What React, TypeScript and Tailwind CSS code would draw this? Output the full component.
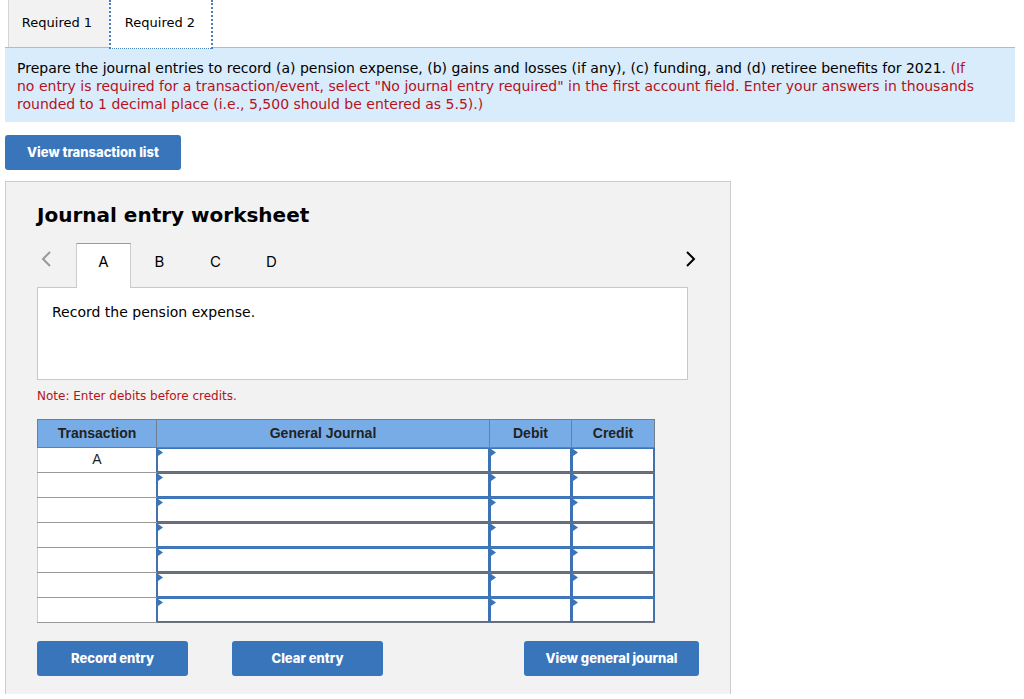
import React, { useState } from 'react';

interface ActionButtonProps {
    children: React.ReactNode;
    className?: string;
}

const ActionButton: React.FC<ActionButtonProps> = ({ children, className = '' }) => {
    return (
        <button
            type="button"
            className={`h-[35px] rounded-[3px] bg-[#3875ba] font-[Inter,sans-serif] text-[13px] font-extrabold text-white ${className}`}
        >
            {children}
        </button>
    );
};

interface EntryCellProps {
    label: string;
}

const EntryCell: React.FC<EntryCellProps> = ({ label }) => {
    return (
        <td className="relative border-x border-y border-x-[#3f72ad] border-y-[#6b7280] p-0">
            <input
                type="text"
                aria-label={label}
                className="block h-6 w-full border border-[#3d74b8] bg-white px-2 text-sm outline-none"
            />
            <svg className="absolute top-[1px] left-[1px]" width="5" height="7" viewBox="0 0 5 7" aria-hidden="true">
                <path d="M0 0 L5 3.5 L0 7 Z" fill="#3875ba" />
            </svg>
        </td>
    );
};

const steps = ['A', 'B', 'C', 'D'];
const rows = ['A', '', '', '', '', '', ''];

export default function App() {
    const [step, setStep] = useState('A');

    return (
        <main className="bg-white pr-[9px] pl-[5px] font-['DejaVu_Sans',Verdana,sans-serif] text-sm text-black">
            <nav className="flex pl-[3px]">
                <button type="button" className="h-[47px] w-[101px] border-l border-[#d5d5d5] bg-[#f2f2f2] pr-1 text-[13px]">
                    Required 1
                </button>
                <button
                    type="button"
                    className="relative -mb-[2px] h-[49px] w-[104px] border-x-2 border-b border-dotted border-[#4a80c0] bg-white pr-0.5 pb-0.5 text-[13px]"
                >
                    Required 2
                </button>
            </nav>

            <section className="border-t border-[#b0bcc8] bg-[#d9ecfb] pt-[11px] pr-9 pb-[9px] pl-3 leading-[18px]">
                <p>
                    Prepare the journal entries to record (a) pension expense, (b) gains and losses (if any), (c) funding, and (d)
                    retiree benefits for 2021.{' '}
                    <span className="text-[#b5121b]">
                        (If no entry is required for a transaction/event, select "No journal entry required" in the first account
                        field. Enter your answers in thousands rounded to 1 decimal place (i.e., 5,500 should be entered as 5.5).)
                    </span>
                </p>
            </section>

            <ActionButton className="mt-[13px] w-[176px]">View transaction list</ActionButton>

            <section className="mt-[11px] max-w-[726px] border border-b-0 border-[#cccccc] bg-[#f2f2f2] px-[31px] pb-[18px]">
                <h1 className="pt-[19px] text-xl leading-7 font-bold">Journal entry worksheet</h1>

                <div className="mt-[14px] flex h-[45px] max-w-[662px] items-start">
                    <button type="button" aria-label="Previous" className="mt-2 w-[39px] pl-1">
                        <svg width="11" height="16" viewBox="0 0 11 16" fill="none" stroke="#999999" strokeWidth="2">
                            <path d="M9 1 L2 8 L9 15" />
                        </svg>
                    </button>
                    {steps.map((name) => (
                        <button
                            key={name}
                            type="button"
                            onClick={() => setStep(name)}
                            className={`
              relative mr-px h-[45px] w-[55px] border border-b-0 pb-2 font-[Inter,sans-serif] text-[15px]
              ${step === name ? 'border-x-[#cccccc] border-t-[#999999] bg-white' : 'border-transparent'}
            `}
                        >
                            {name}
                        </button>
                    ))}
                    <button type="button" aria-label="Next" className="mt-2 ml-auto pr-0.5">
                        <svg width="11" height="16" viewBox="0 0 11 16" fill="none" stroke="#000000" strokeWidth="2">
                            <path d="M1 1 L8 8 L1 15" />
                        </svg>
                    </button>
                </div>

                <div className="-mt-px h-[93px] max-w-[651px] border border-[#c8c8c8] bg-white px-[14px] pt-[15px] leading-[18px]">
                    Record the pension expense.
                </div>
                <p className="mt-[7px] text-xs leading-[18px] text-[#b5121b]">Note: Enter debits before credits.</p>

                <table className="mt-[14px] w-full max-w-[618px] table-fixed border-collapse font-['Liberation_Sans',Arial,sans-serif] text-sm text-[#222222]">
                    <colgroup>
                        <col className="w-[119px]" />
                        <col />
                        <col className="w-[82px]" />
                        <col className="w-[83px]" />
                    </colgroup>
                    <thead>
                        <tr className="h-7 bg-[#78ace6]">
                            <th className="border border-[#6f7f90] p-0 pb-0.5">Transaction</th>
                            <th className="border border-[#6f7f90] p-0 pb-0.5">General Journal</th>
                            <th className="border border-[#6f7f90] p-0 pb-0.5">Debit</th>
                            <th className="border border-[#6f7f90] p-0 pb-0.5">Credit</th>
                        </tr>
                    </thead>
                    <tbody>
                        {rows.map((row, i) => (
                            <tr key={i} className="h-[25px]">
                                <td className="border border-y-[#999999] border-r-[#3f72ad] border-l-[#cccccc] bg-white p-0 pb-0.5 text-center">
                                    {row}
                                </td>
                                <EntryCell label={`General journal, line ${i + 1}`} />
                                <EntryCell label={`Debit, line ${i + 1}`} />
                                <EntryCell label={`Credit, line ${i + 1}`} />
                            </tr>
                        ))}
                    </tbody>
                </table>

                <div className="mt-[18px] flex max-w-[663px]">
                    <ActionButton className="w-[151px]">Record entry</ActionButton>
                    <ActionButton className="ml-11 w-[151px]">Clear entry</ActionButton>
                    <ActionButton className="ml-auto w-[175px]">View general journal</ActionButton>
                </div>
            </section>
        </main>
    );
}
